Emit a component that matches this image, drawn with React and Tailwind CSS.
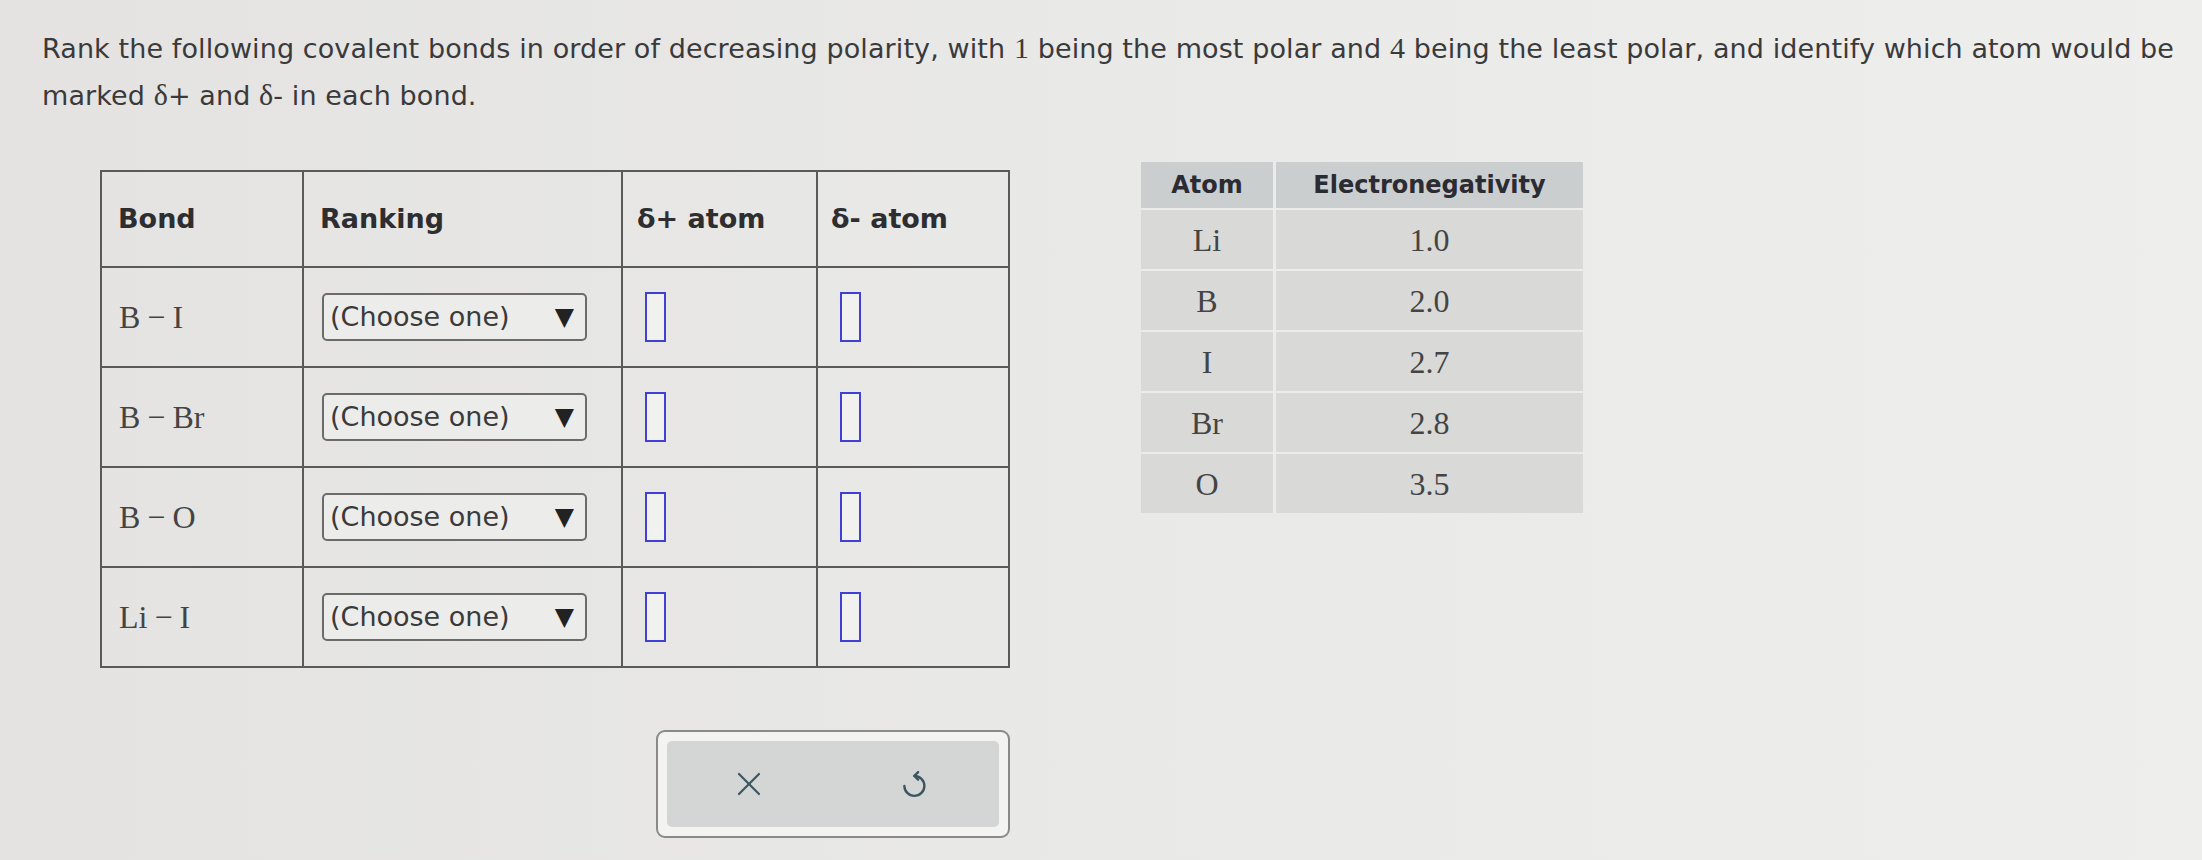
const bonds = [
  ['B', 'I'],
  ['B', 'Br'],
  ['B', 'O'],
  ['Li', 'I'],
];

const atoms = [
  ['Li', '1.0'],
  ['B', '2.0'],
  ['I', '2.7'],
  ['Br', '2.8'],
  ['O', '3.5'],
];

const serif = "font-['Liberation_Serif',serif]";

const BondName = ({ a, b }) => (
  <span className={`${serif} text-[32px] text-[#444]`}>
    {a}
    <span className="mx-[7px]">−</span>
    {b}
  </span>
);

const ChooseOne = () => (
  <div className="flex items-center justify-between w-[265px] h-[48px] border-2 border-[#6b6b6b] rounded-[5px] bg-[#ececeb] pl-[6px] pr-[11px]">
    <span className="text-[27px] text-[#3a3a3a]">(Choose one)</span>
    <span className="text-[25px] text-[#222]">▼</span>
  </div>
);

const AnswerBox = () => <div className="w-[21px] h-[50px] border-[2.5px] border-[#4040d4] bg-[#f1f1f0]" />;

const CloseIcon = () => (
  <svg width="26" height="26" viewBox="0 0 26 26" fill="none" stroke="#3b5661" strokeWidth="2.2" strokeLinecap="round">
    <path d="M3 3 23 23" />
    <path d="M23 3 3 23" />
  </svg>
);

const UndoIcon = () => (
  <svg width="30" height="30" viewBox="0 0 24 24" fill="none" stroke="#3b5661" strokeWidth="1.9" strokeLinecap="round" strokeLinejoin="round">
    <path d="M11.5 5.5a8 8 0 1 1-8 8" />
    <path d="M14.5 2.5 11.5 5.5l3 3" />
  </svg>
);

export default function App() {
  return (
    <div className="min-h-screen w-full bg-gradient-to-r from-[#e4e3e1] via-[#e9e9e7] to-[#eeeeec] font-['DejaVu_Sans',sans-serif] text-[#3a3a3c]">
      <div className="px-[42px] pt-[25px]">
        {/* Question */}
        <p className="text-[27px] leading-[46px] tracking-[0.1px]">
          <span className="whitespace-nowrap">
            Rank the following covalent bonds in order of decreasing polarity, with <span className={`${serif} text-[30px]`}>1</span> being the most polar and <span className={`${serif} text-[30px]`}>4</span> being the least polar, and identify which atom would be
          </span>
          <br />
          marked <span className={`${serif} text-[30px]`}>δ</span>+ and <span className={`${serif} text-[30px]`}>δ</span>- in each bond.
        </p>

        <div className="flex items-start mt-[43px] pl-[58px]">
          {/* Answer table */}
          <div className="flex flex-col">
            <table className="mt-[8px] border-collapse table-fixed">
              <colgroup>
                <col className="w-[202px]" />
                <col className="w-[319px]" />
                <col className="w-[195px]" />
                <col className="w-[192px]" />
              </colgroup>
              <thead>
                <tr className="h-[96px] text-[27px] font-bold text-[#2e2e30]">
                  <th className="border-2 border-[#5a5a5a] text-left pl-[16px] font-bold">Bond</th>
                  <th className="border-2 border-[#5a5a5a] text-left pl-[16px] font-bold">Ranking</th>
                  <th className="border-2 border-[#5a5a5a] text-left pl-[14px] font-bold">δ+ atom</th>
                  <th className="border-2 border-[#5a5a5a] text-left pl-[13px] font-bold">δ- atom</th>
                </tr>
              </thead>
              <tbody>
                {bonds.map(([a, b]) => (
                  <tr key={a + b} className="h-[100px]">
                    <td className="border-2 border-[#5a5a5a] pl-[17px]">
                      <BondName a={a} b={b} />
                    </td>
                    <td className="border-2 border-[#5a5a5a] pl-[18px]">
                      <ChooseOne />
                    </td>
                    <td className="border-2 border-[#5a5a5a] pl-[22px]">
                      <AnswerBox />
                    </td>
                    <td className="border-2 border-[#5a5a5a] pl-[22px]">
                      <AnswerBox />
                    </td>
                  </tr>
                ))}
              </tbody>
            </table>

            {/* Action buttons */}
            <div className="self-end mt-[62px] w-[354px] h-[108px] rounded-[9px] border-2 border-[#8a8a8a] bg-[#f3f3f2] p-[9px]">
              <div className="flex h-full items-center justify-around rounded-[5px] bg-[#d4d5d5]">
                <CloseIcon />
                <UndoIcon />
              </div>
            </div>
          </div>

          {/* Electronegativity table */}
          <div className="ml-[131px] grid grid-cols-[132px_307px] gap-x-[3px] gap-y-[2px] bg-[#ececeb]">
            <div className="h-[46px] flex items-center justify-center bg-[#cbcecf] text-[24px] font-bold text-[#2b2b33]">Atom</div>
            <div className="h-[46px] flex items-center justify-center bg-[#cbcecf] text-[24px] font-bold text-[#2b2b33]">Electronegativity</div>
            {atoms.map(([atom, en]) => (
              <div key={atom} className="contents">
                <div className={`h-[59px] flex items-center justify-center bg-[#d9d9d8] ${serif} text-[32px] text-[#444]`}>{atom}</div>
                <div className={`h-[59px] flex items-center justify-center bg-[#d9d9d8] ${serif} text-[32px] text-[#444]`}>{en}</div>
              </div>
            ))}
          </div>
        </div>
      </div>
    </div>
  );
}
